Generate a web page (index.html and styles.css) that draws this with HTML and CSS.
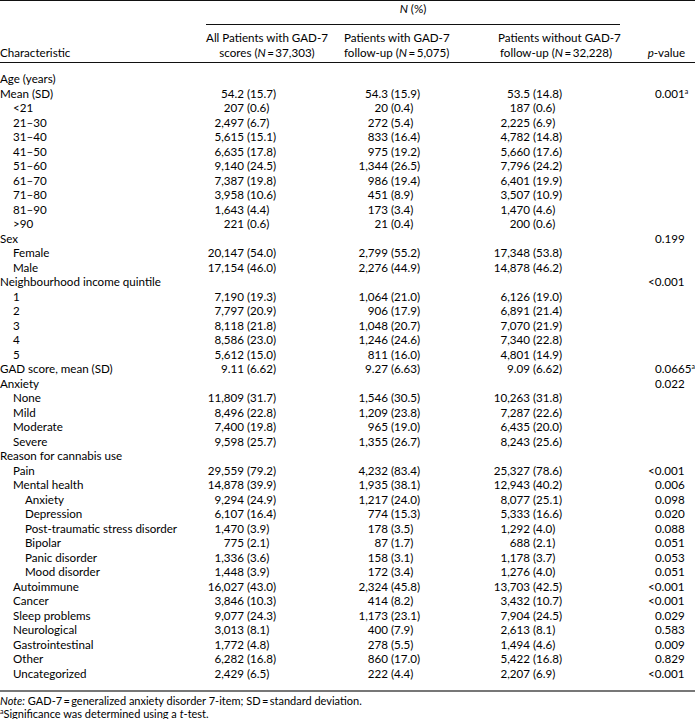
FILE: index.html
```html
<!DOCTYPE html>
<html lang="en">
<head>
    <meta charset="UTF-8">
    <title>Patient characteristics</title>
    <link rel="stylesheet" href="styles.css">
</head>
<body>

    <table class="stats">
        <colgroup>
            <col class="col-label">
            <col class="col-all">
            <col class="col-with">
            <col class="col-without">
            <col class="col-p">
        </colgroup>
        <thead>
            <tr class="spanner-row">
                <th></th>
                <th colspan="3" class="spanner"><div class="spanner-line"><i>N</i> (%)</div></th>
                <th></th>
            </tr>
            <tr class="head-row">
                <th class="label">Characteristic</th>
                <th class="c1">All Patients with GAD-7<br>scores (<i>N</i>&thinsp;=&thinsp;37,303)</th>
                <th class="c2">Patients with GAD-7<br>follow-up (<i>N</i>&thinsp;=&thinsp;5,075)</th>
                <th class="c3">Patients without GAD-7<br>follow-up (<i>N</i>&thinsp;=&thinsp;32,228)</th>
                <th class="p"><i>p</i>-value</th>
            </tr>
        </thead>
        <tbody id="rows"></tbody>
    </table>

    <div class="notes">
        <p><i>Note:</i> GAD-7&thinsp;=&thinsp;generalized anxiety disorder 7-item; SD&thinsp;=&thinsp;standard deviation.</p>
        <p><sup>a</sup>Significance was determined using a <i>t</i>-test.</p>
    </div>

    <script>
        // [label, indent level, all, with, without, p]
        const rows = [
            ["Age (years)", 0],
            ["Mean (SD)", 0, "54.2 (15.7)", "54.3 (15.9)", "53.5 (14.8)", "0.001^"],
            ["<21", 1, "207 (0.6)", "20 (0.4)", "187 (0.6)"],
            ["21–30", 1, "2,497 (6.7)", "272 (5.4)", "2,225 (6.9)"],
            ["31–40", 1, "5,615 (15.1)", "833 (16.4)", "4,782 (14.8)"],
            ["41–50", 1, "6,635 (17.8)", "975 (19.2)", "5,660 (17.6)"],
            ["51–60", 1, "9,140 (24.5)", "1,344 (26.5)", "7,796 (24.2)"],
            ["61–70", 1, "7,387 (19.8)", "986 (19.4)", "6,401 (19.9)"],
            ["71–80", 1, "3,958 (10.6)", "451 (8.9)", "3,507 (10.9)"],
            ["81–90", 1, "1,643 (4.4)", "173 (3.4)", "1,470 (4.6)"],
            [">90", 1, "221 (0.6)", "21 (0.4)", "200 (0.6)"],
            ["Sex", 0, "", "", "", "0.199"],
            ["Female", 1, "20,147 (54.0)", "2,799 (55.2)", "17,348 (53.8)"],
            ["Male", 1, "17,154 (46.0)", "2,276 (44.9)", "14,878 (46.2)"],
            ["Neighbourhood income quintile", 0, "", "", "", "<0.001"],
            ["1", 1, "7,190 (19.3)", "1,064 (21.0)", "6,126 (19.0)"],
            ["2", 1, "7,797 (20.9)", "906 (17.9)", "6,891 (21.4)"],
            ["3", 1, "8,118 (21.8)", "1,048 (20.7)", "7,070 (21.9)"],
            ["4", 1, "8,586 (23.0)", "1,246 (24.6)", "7,340 (22.8)"],
            ["5", 1, "5,612 (15.0)", "811 (16.0)", "4,801 (14.9)"],
            ["GAD score, mean (SD)", 0, "9.11 (6.62)", "9.27 (6.63)", "9.09 (6.62)", "0.0665^"],
            ["Anxiety", 0, "", "", "", "0.022"],
            ["None", 1, "11,809 (31.7)", "1,546 (30.5)", "10,263 (31.8)"],
            ["Mild", 1, "8,496 (22.8)", "1,209 (23.8)", "7,287 (22.6)"],
            ["Moderate", 1, "7,400 (19.8)", "965 (19.0)", "6,435 (20.0)"],
            ["Severe", 1, "9,598 (25.7)", "1,355 (26.7)", "8,243 (25.6)"],
            ["Reason for cannabis use", 0],
            ["Pain", 1, "29,559 (79.2)", "4,232 (83.4)", "25,327 (78.6)", "<0.001"],
            ["Mental health", 1, "14,878 (39.9)", "1,935 (38.1)", "12,943 (40.2)", "0.006"],
            ["Anxiety", 2, "9,294 (24.9)", "1,217 (24.0)", "8,077 (25.1)", "0.098"],
            ["Depression", 2, "6,107 (16.4)", "774 (15.3)", "5,333 (16.6)", "0.020"],
            ["Post-traumatic stress disorder", 2, "1,470 (3.9)", "178 (3.5)", "1,292 (4.0)", "0.088"],
            ["Bipolar", 2, "775 (2.1)", "87 (1.7)", "688 (2.1)", "0.051"],
            ["Panic disorder", 2, "1,336 (3.6)", "158 (3.1)", "1,178 (3.7)", "0.053"],
            ["Mood disorder", 2, "1,448 (3.9)", "172 (3.4)", "1,276 (4.0)", "0.051"],
            ["Autoimmune", 1, "16,027 (43.0)", "2,324 (45.8)", "13,703 (42.5)", "<0.001"],
            ["Cancer", 1, "3,846 (10.3)", "414 (8.2)", "3,432 (10.7)", "<0.001"],
            ["Sleep problems", 1, "9,077 (24.3)", "1,173 (23.1)", "7,904 (24.5)", "0.029"],
            ["Neurological", 1, "3,013 (8.1)", "400 (7.9)", "2,613 (8.1)", "0.583"],
            ["Gastrointestinal", 1, "1,772 (4.8)", "278 (5.5)", "1,494 (4.6)", "0.009"],
            ["Other", 1, "6,282 (16.8)", "860 (17.0)", "5,422 (16.8)", "0.829"],
            ["Uncategorized", 1, "2,429 (6.5)", "222 (4.4)", "2,207 (6.9)", "<0.001"]
        ];

        function esc(s) {
            return s.replace(/&/g, "&amp;").replace(/</g, "&lt;").replace(/>/g, "&gt;");
        }

        function numCell(value, cls) {
            if (!value) return `<td class="${cls}"></td>`;
            const parts = value.split(" ");
            return `<td class="${cls}"><span class="n">${parts[0]}</span> ${parts[1]}</td>`;
        }

        function pCell(value) {
            if (!value) return `<td class="p"></td>`;
            let html = esc(value);
            html = html.replace("&lt;", '<span class="lt">&lt;</span>');
            html = html.replace("^", "<sup>a</sup>");
            return `<td class="p">${html}</td>`;
        }

        const body = document.getElementById("rows");
        body.innerHTML = rows.map(r => {
            const [label, indent, all, withF, withoutF, p] = r;
            return `<tr>
                <td class="label indent-${indent}">${esc(label)}</td>
                ${numCell(all, "c1")}
                ${numCell(withF, "c2")}
                ${numCell(withoutF, "c3")}
                ${pCell(p)}
            </tr>`;
        }).join("");
    </script>

</body>
</html>
```

FILE: styles.css
```css
body {
    margin: 0;
    padding: 0;
    font-family: Lato, "Open Sans", sans-serif;
    font-size: 11.6px;
    color: #000;
    background-color: white;
    width: 695px;
}

.stats {
    width: 695px;
    border-collapse: collapse;
    table-layout: fixed;
    border-top: 1px solid #111;
}

.col-label { width: 200px; }
.col-all { width: 130px; }
.col-with { width: 124px; }
.col-without { width: 166px; }
.col-p { width: 75px; }

.stats th,
.stats td {
    padding: 0;
    font-weight: normal;
    line-height: 14.5px;
    white-space: nowrap;
}

.spanner-row th {
    height: 25px;
    vertical-align: top;
}

.spanner-line {
    margin-left: 6px;
    padding-top: 1px;
    height: 24px;
    box-sizing: border-box;
    border-bottom: 1px solid #111;
    text-align: center;
}

.head-row th {
    padding: 5px 0 2px 0;
    text-align: center;
    vertical-align: bottom;
    border-bottom: 1px solid #111;
}

.head-row .label {
    text-align: left;
}

.head-row .c1 {
    padding-left: 6px;
    padding-right: 2px;
}

.head-row .c2 {
    padding-left: 14px;
    padding-right: 12px;
}

.head-row .c3 {
    padding-left: 44px;
    padding-right: 6px;
}

.head-row .p {
    text-align: right;
    padding-right: 10px;
}

tbody tr:first-child td {
    padding-top: 9px;
}

tbody tr:last-child td {
    padding-bottom: 9px;
}

.stats tbody {
    border-bottom: 2px solid #777;
}

.indent-0 { padding-left: 0; }
.stats .indent-1 { padding-left: 13px; }
.stats .indent-2 { padding-left: 25px; }

.stats td.c1 { padding-left: 4px; }
.stats td.c2 { padding-left: 18px; }
.stats td.c3 { padding-left: 36px; }
.stats td.p { padding-left: 35px; }

.n {
    display: inline-block;
    width: 40px;
    text-align: right;
}

.lt {
    margin-left: -7px;
}

sup {
    font-size: 7px;
    line-height: 0;
    vertical-align: 4px;
}

.notes {
    padding-top: 3px;
}

.notes p {
    margin: 0;
    font-size: 11px;
    line-height: 12.5px;
}
```
